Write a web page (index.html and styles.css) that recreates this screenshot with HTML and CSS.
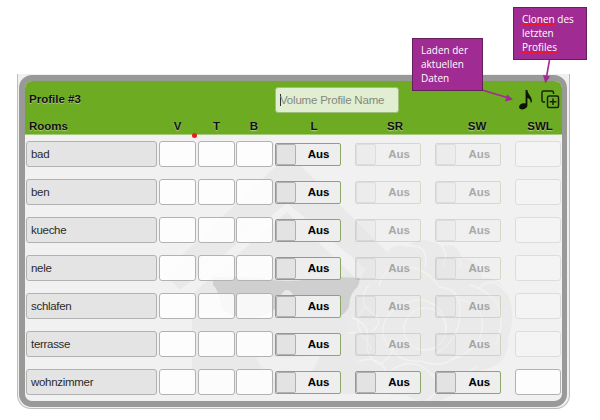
FILE: index.html
```
<!DOCTYPE html>
<html lang="de">
<head>
<meta charset="utf-8">
<title>Volume Profile</title>
<link rel="stylesheet" href="styles.css">
</head>
<body>
<div class="frame">
<section class="panel">
  <svg class="watermark" viewBox="25 81 537 321" aria-hidden="true">
    <path fill="#e9e9e9" d="M277 165Q288 153 300 165L388 253L367 270L287 203L180 290L163 273Z"/>
    <path fill="#e9e9e9" d="M287 212L385 306V394H192V294Z"/>
    <path fill="#cfcfcf" d="M213 277Q240 276 265 279Q287 283 310 279Q335 276 360 278Q359 286 355 290Q350 310 342 315Q330 320 310 316Q297 312 293 295Q287 285 281 295Q278 315 255 318Q230 318 222 308Q219 290 213 285Z"/>
    <path fill="#f0f0f0" d="M255 354Q287 361 320 354Q313 381 287 383Q262 378 255 354Z"/>
    <path fill="#eaeaea" d="M386 254Q393 242 407 247Q420 236 433 242Q441 243 443 246Q458 242 462 258Q480 260 482 278Q502 277 509 297Q516 320 508 337Q510 365 482 370Q475 394 452 395Q430 409 405 395Q380 398 373 379Q351 373 353 350Q341 334 352 318Q344 297 359 286Q362 265 386 254Z"/>
    <g fill="none" stroke="#f2f2f2" stroke-width="1.500">
      <circle cx="425" cy="329" r="21"/>
      <path d="M379 286Q384 264 409 267Q426 269 438 285M406 246Q430 243 425 267M437 242Q450 250 443 266M459 258Q463 263 459 269M479 288Q493 274 507 293M438 287Q465 288 459 322Q456 342 435 354M459 299Q490 306 480 338Q469 355 450 360M470 285Q515 300 495 345M398 310Q413 293 433 304Q447 313 446 330M369 285Q355 302 375 315Q384 322 371 332M397 307Q373 326 389 347Q401 363 421 361M352 318Q371 324 367 342Q365 355 379 365M348 333Q365 330 371 350M359 361Q384 354 388 379Q390 394 410 394M389 372Q413 354 431 374Q445 389 426 401M421 361Q445 370 459 354M431 374Q459 382 476 367M366 307Q352 318 362 334M379 365Q399 352 390 339"/>
    </g>
  </svg>
  <header class="head">
    <div class="title-row">
      <h1 class="title">Profile #3</h1>
      <div class="name"><i class="caret"></i>Volume Profile Name</div>
      <svg class="note" viewBox="0 0 14 20"><path d="M6.600 0H8.400C8.500 4.800 13.600 6 12.800 12.300L11.400 12.500Q12 9 8.400 8V15.500C8.400 19.300 1 21 .1 17.600C-.4 14.200 3.800 12.500 6.600 13.600Z"/></svg>
      <svg class="clone" viewBox="0 0 19 19"><path d="M4 12H2.500Q1 12 1 10.500V2.500Q1 1 2.500 1H11Q12.500 1 12.500 2.500V4M8 6H16Q17.500 6 17.500 7.500V16Q17.500 17.500 16 17.500H8Q6.500 17.500 6.500 16V7.500Q6.500 6 8 6M12 8.500V15M8.700 11.800H15.300"/></svg>
    </div>
    <div class="labels">
      <span class="rooms">Rooms</span><span>V</span><span>T</span><span>B</span><span>L</span><span>SR</span><span>SW</span><span>SWL</span>
    </div>
  </header>
  <div class="rows">
    <div class="row"><div class="field room">bad</div><div class="field"></div><div class="field"></div><div class="field"></div><div class="toggle"><i></i><b>Aus</b></div><div class="toggle off"><i></i><b>Aus</b></div><div class="toggle off"><i></i><b>Aus</b></div><div class="field off"></div></div>
    <div class="row"><div class="field room">ben</div><div class="field"></div><div class="field"></div><div class="field"></div><div class="toggle"><i></i><b>Aus</b></div><div class="toggle off"><i></i><b>Aus</b></div><div class="toggle off"><i></i><b>Aus</b></div><div class="field off"></div></div>
    <div class="row"><div class="field room">kueche</div><div class="field"></div><div class="field"></div><div class="field"></div><div class="toggle"><i></i><b>Aus</b></div><div class="toggle off"><i></i><b>Aus</b></div><div class="toggle off"><i></i><b>Aus</b></div><div class="field off"></div></div>
    <div class="row"><div class="field room">nele</div><div class="field"></div><div class="field"></div><div class="field"></div><div class="toggle"><i></i><b>Aus</b></div><div class="toggle off"><i></i><b>Aus</b></div><div class="toggle off"><i></i><b>Aus</b></div><div class="field off"></div></div>
    <div class="row"><div class="field room">schlafen</div><div class="field"></div><div class="field"></div><div class="field"></div><div class="toggle"><i></i><b>Aus</b></div><div class="toggle off"><i></i><b>Aus</b></div><div class="toggle off"><i></i><b>Aus</b></div><div class="field off"></div></div>
    <div class="row"><div class="field room">terrasse</div><div class="field"></div><div class="field"></div><div class="field"></div><div class="toggle"><i></i><b>Aus</b></div><div class="toggle off"><i></i><b>Aus</b></div><div class="toggle off"><i></i><b>Aus</b></div><div class="field off"></div></div>
    <div class="row"><div class="field room">wohnzimmer</div><div class="field"></div><div class="field"></div><div class="field"></div><div class="toggle"><i></i><b>Aus</b></div><div class="toggle"><i></i><b>Aus</b></div><div class="toggle"><i></i><b>Aus</b></div><div class="field"></div></div>
  </div>
</section>
</div>
<i class="dot"></i>
<svg class="arrows" viewBox="0 0 600 420" aria-hidden="true">
  <path d="M482 90L507 97.500M549.500 60L546.500 77" stroke="#a02b93" stroke-width="1.600"/>
  <path d="M513 99.500L505 101.500L507 94.500ZM545.300 83.500L543 75L550 76.500Z" fill="#a02b93"/>
</svg>
<div class="callout load">Laden der<br>aktuellen<br>Daten</div>
<div class="callout copy"><u>Clonen</u> des<br>letzten<br><u>Profiles</u></div>
</body>
</html>
```
FILE: styles.css
```
* { box-sizing: border-box; }
body {
  margin: 0;
  width: 600px;
  height: 420px;
  padding: 74px 0 0 17px;
  position: relative;
  overflow: hidden;
  background: #fff;
  font-family: "Liberation Sans", Arial, sans-serif;
  font-size: 12px;
  color: #111;
}
.frame {
  width: 553px;
  height: 335px;
  padding: 1px 2px 2px 1px;
  background: #f0f0f0;
  border: solid #bcbcbc;
  border-width: 0 1px 1px;
  border-radius: 0 0 14px 14px;
}
.panel {
  position: relative;
  width: 548px;
  height: 332px;
  border: 6px solid #999a97;
  border-right-width: 5px;
  border-radius: 13px;
  background: #f1f1f1;
  overflow: hidden;
}
.watermark { position: absolute; left: 0; top: 0; width: 537px; height: 321px; }
.head {
  position: relative;
  height: 54px;
  background: #6dab22;
  border-bottom: 1px solid #a5ca79;
  text-shadow: 0 1px 1px #b3cf91;
}
.title-row { height: 37px; display: flex; align-items: center; padding-left: 4px; }
.title { width: 246px; margin: 0 0 1px; font-size: 11.500px; line-height: 14px; }
.name {
  width: 124px;
  height: 26px;
  margin-top: 1px;
  padding-left: 4px;
  display: flex;
  align-items: center;
  border: 1px solid #9fbe78;
  border-radius: 3px;
  background: #e1eed2;
  color: #83897c;
  font-size: 11.500px;
  letter-spacing: -.2px;
  text-shadow: none;
  white-space: nowrap;
}
.caret { width: 1px; height: 12px; margin-right: -1px; background: #333; }
.note { width: 14px; height: 20px; margin: 0 0 0 120px; fill: #0b1502; }
.clone { width: 19px; height: 19px; margin: 0 0 1px 8px; fill: none; stroke: #17240a; stroke-width: 1.500; }
.labels { display: flex; font-weight: bold; line-height: 16px; font-size: 11.500px; }
.labels span { width: 39px; text-align: center; }
.labels .rooms { width: 133px; padding-left: 4px; text-align: left; }
.labels span:nth-child(4) { width: 36px; }
.labels span:nth-child(5) { width: 84px; }
.labels span:nth-child(6) { width: 78px; }
.labels span:nth-child(7) { width: 86px; }
.labels span:nth-child(8) { width: 40px; }
.rows { position: relative; padding: 6px 0 0 1px; display: grid; row-gap: 12px; }
.row {
  display: grid;
  height: 26px;
  align-items: center;
  grid-template-columns: 133px 38.500px 38.500px 38.500px 80.500px 80.300px 80.200px 46px;
}
.field {
  width: 37px;
  height: 26px;
  border: 1px solid #b2b2b2;
  border-radius: 3px;
  background: rgba(255, 255, 255, .85);
}
.room {
  width: 131px;
  padding-left: 4px;
  line-height: 24px;
  background: #e4e4e4;
  color: #2b2b2b;
  font-size: 11.500px;
  letter-spacing: -.3px;
}
.row > :last-child { width: 46px; }
.toggle {
  width: 66px;
  height: 23px;
  display: flex;
  align-items: center;
  border: 1px solid #8ba669;
  border-radius: 2px;
  background: #eee;
}
.toggle i {
  width: 20px;
  height: 21px;
  border: 1px solid #b0b0b0;
  border-radius: 2px;
  background: #e3e3e3;
}
.toggle b { flex: 1; padding-left: 2px; text-align: center; font-size: 11.500px; text-shadow: 0 1px 1px #ddd; color: #000; }
.off { opacity: .3; }
.dot {
  position: absolute;
  left: 192px;
  top: 133px;
  width: 5px;
  height: 5px;
  border-radius: 50%;
  background: #e91f1f;
}
.arrows { position: absolute; left: 0; top: 0; width: 600px; height: 420px; }
.callout {
  position: absolute;
  border: 1px solid #64205d;
  background: #a02b93;
  color: #fff;
  font: 500 10px/14px "Open Sans", sans-serif;
  padding: 4px 8px;
  white-space: nowrap;
}
.load { left: 412px; top: 38px; width: 71px; height: 53px; }
.copy { left: 513px; top: 7px; width: 74px; height: 53px; }
.callout u {
  text-decoration: none;
  background: linear-gradient(#f0142c, #f0142c) 0 12px / 100% 1px no-repeat;
}
```
